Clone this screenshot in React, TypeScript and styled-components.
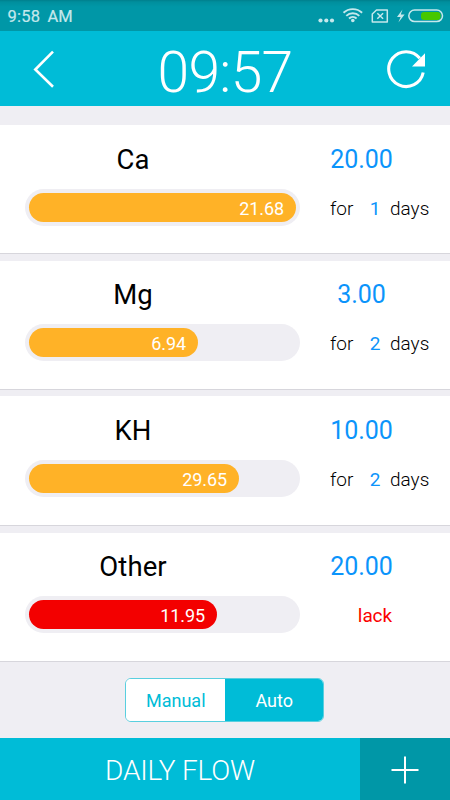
import React from "react";
import styled, { createGlobalStyle } from "styled-components";

const GlobalStyle = createGlobalStyle`
  * { box-sizing: border-box; }
  body { margin: 0; background: #efeef3; font-family: Roboto, sans-serif; }
  button { border: 0; padding: 0; margin: 0; background: none; font-family: inherit; }
`;

const Screen = styled.div`
  width: 450px;
  height: 800px;
  display: flex;
  flex-direction: column;
  overflow: hidden;
  background: #efeef3;
`;

const StatusBar = styled.div`
  height: 31px;
  flex: none;
  display: flex;
  align-items: center;
  justify-content: space-between;
  padding: 2px 6px 0 7.5px;
  color: #c5e8ec;
  background: linear-gradient(#007f8c 0, #008f9d 2px, #0097a7 7px);
`;

const Clock = styled.span`
  font-size: 16.5px;
  line-height: 20px;
  letter-spacing: 0.2px;
  word-spacing: 3px;
  -webkit-text-stroke: 0.2px currentColor;
`;

const Header = styled.header`
  height: 75px;
  flex: none;
  display: flex;
  align-items: center;
  justify-content: space-between;
  padding: 0 23px 0 33px;
  background: #00bcd7;
  color: #fff;
`;

const IconButton = styled.button`
  display: flex;
  color: #fff;
`;

const Title = styled.h1`
  margin: 0;
  font-size: 57px;
  line-height: 75px;
  font-weight: 300;
  letter-spacing: -0.7px;
  padding: 7px 0 0 8px;
`;

const List = styled.main`
  flex: none;
  height: 537px;
  margin-top: 19px;
  display: flex;
  flex-direction: column;
`;

const Card = styled.section`
  height: 129px;
  flex: none;
  display: grid;
  grid-template-columns: 275px 121px;
  grid-template-rows: 36px 37px;
  row-gap: 12px;
  column-gap: 8px;
  justify-content: start;
  padding: 15px 0 0 25px;
  background: #fff;
  border-bottom: 1px solid #d7d6dc;

  & + & {
    margin-top: 7px;
  }

  &:first-child {
    padding-top: 16px;
  }

  &:nth-child(3) {
    height: 130px;
    margin-top: 6px;
    padding-top: 16px;
  }
`;

const Name = styled.div`
  width: 216px;
  text-align: center;
  font-size: 27.5px;
  line-height: 38px;
  letter-spacing: 0.1px;
  color: #000;
`;

const Amount = styled.div`
  width: 107px;
  text-align: center;
  font-size: 25px;
  line-height: 38px;
  letter-spacing: -0.1px;
  color: #0b94fb;
`;

const Track = styled.div`
  height: 37px;
  padding: 4px;
  border-radius: 19px;
  background: #efeef3;
`;

const Fill = styled.div<{ $alert?: boolean }>`
  height: 29px;
  border-radius: 15px;
  padding-right: 12px;
  text-align: right;
  font-size: 18px;
  line-height: 31px;
  letter-spacing: -0.1px;
  color: #fff;
  background: ${(p) => (p.$alert ? "#f30000" : "#ffb227")};
`;

const Duration = styled.div`
  display: grid;
  grid-template-columns: 37px 16px 46px;
  justify-content: end;
  line-height: 39px;
  font-size: 19px;
  font-weight: 300;
  color: #000;
  white-space: nowrap;
`;

const Days = styled.span`
  text-align: center;
  font-weight: 400;
  color: #0b94fb;
`;

const Unit = styled.span`
  padding-left: 7px;
`;

const Lack = styled.div`
  padding-right: 37px;
  text-align: right;
  font-size: 19px;
  line-height: 40px;
  letter-spacing: -0.1px;
  color: #fb0000;
`;

const ModeArea = styled.div`
  flex: 1;
  display: flex;
  justify-content: center;
  align-items: flex-start;
  padding: 16px 1px 0 0;
`;

const Segments = styled.div`
  display: grid;
  grid-template-columns: 1fr 1fr;
  width: 199px;
  height: 44px;
  overflow: hidden;
  border: 1px solid #59cfdf;
  border-radius: 6px;
  background: #fff;
`;

const Segment = styled.button<{ $active?: boolean }>`
  font-size: 18px;
  line-height: 42px;
  padding: 1px 0 0 1px;
  color: ${(p) => (p.$active ? "#fff" : "#00bcd7")};
  background: ${(p) => (p.$active ? "#00bcd7" : "#fff")};
`;

const Footer = styled.footer`
  height: 62px;
  flex: none;
  display: grid;
  grid-template-columns: 360px 90px;
  background: #00bcd7;
`;

const FlowButton = styled.button`
  color: #fff;
  font-size: 28px;
  font-weight: 300;
  line-height: 62px;
  letter-spacing: -0.2px;
  padding-top: 2px;
`;

const AddButton = styled.button`
  display: flex;
  align-items: center;
  justify-content: center;
  background: #0097a7;
`;

type Item = {
  name: string;
  amount: string;
  level: string;
  width: number;
  days?: number;
};

const items: Item[] = [
  { name: "Ca", amount: "20.00", level: "21.68", width: 267, days: 1 },
  { name: "Mg", amount: "3.00", level: "6.94", width: 169, days: 2 },
  { name: "KH", amount: "10.00", level: "29.65", width: 210, days: 2 },
  { name: "Other", amount: "20.00", level: "11.95", width: 188 },
];

const StatusIcons = () => (
  <svg width="127" height="24" viewBox="317 5 127 24" fill="none">
    <g fill="#c5e8ec">
      <circle cx="320.5" cy="20.5" r="2.1" />
      <circle cx="326.3" cy="20.5" r="2.1" />
      <circle cx="332" cy="20.5" r="2.1" />
      <circle cx="352.8" cy="20.5" r="1.8" />
      <path d="M402.5 9.5 397 17h3.6l-2.2 5.5 6.2-8h-3.8z" />
    </g>
    <g stroke="#c5e8ec" strokeWidth="1.9">
      <path d="M343.5 12.8a13.5 13.5 0 0 1 18.6 0M346.3 15.9a9.2 9.2 0 0 1 13 0M349 18.5a5.5 5.5 0 0 1 7.6 0" />
      <path d="M376.5 10h10.8v12h-15v-8z" strokeWidth="1.5" strokeLinejoin="round" />
      <path d="m377.3 13.2 5.8 5.6m0-5.6-5.8 5.6" strokeWidth="1.5" />
    </g>
    <rect x="421" y="12" width="19.5" height="8" rx="3" fill="#46c800" />
    <rect x="408.8" y="10" width="33.7" height="11.6" rx="5.8" stroke="#c5e8ec" strokeWidth="1.5" />
  </svg>
);

const BackIcon = () => (
  <svg width="23" height="40" viewBox="33 48.5 23 40" fill="none">
    <path d="M53 51.2 35.3 69 53 86.2" stroke="#fff" strokeWidth="2.6" />
  </svg>
);

const RefreshIcon = () => (
  <svg width="41" height="42" viewBox="386 47.5 41 42" fill="none">
    <path d="M423.2 72a17.4 17.4 0 1 1-3.4-14.2" stroke="#fff" strokeWidth="3.1" />
    <path d="M425 52.8V66h-13z" fill="#fff" />
  </svg>
);

const PlusIcon = () => (
  <svg width="28" height="28" viewBox="0 0 28 28" fill="none">
    <path d="M14 .5v27M.5 14h27" stroke="#fff" strokeWidth="2" />
  </svg>
);

const SupplementCard = ({ item }: { item: Item }) => (
  <Card>
    <Name>{item.name}</Name>
    <Amount>{item.amount}</Amount>
    <Track>
      <Fill $alert={item.days === undefined} style={{ width: item.width }}>
        {item.level}
      </Fill>
    </Track>
    {item.days === undefined ? (
      <Lack>lack</Lack>
    ) : (
      <Duration>
        <span>for</span>
        <Days>{item.days}</Days>
        <Unit>days</Unit>
      </Duration>
    )}
  </Card>
);

export default function App() {
  return (
    <>
      <GlobalStyle />
      <Screen>
        <StatusBar>
          <Clock>9:58 AM</Clock>
          <StatusIcons />
        </StatusBar>
        <Header>
          <IconButton aria-label="Back">
            <BackIcon />
          </IconButton>
          <Title>09:57</Title>
          <IconButton aria-label="Refresh">
            <RefreshIcon />
          </IconButton>
        </Header>
        <List>
          {items.map((item) => (
            <SupplementCard key={item.name} item={item} />
          ))}
        </List>
        <ModeArea>
          <Segments>
            <Segment>Manual</Segment>
            <Segment $active>Auto</Segment>
          </Segments>
        </ModeArea>
        <Footer>
          <FlowButton>DAILY FLOW</FlowButton>
          <AddButton aria-label="Add">
            <PlusIcon />
          </AddButton>
        </Footer>
      </Screen>
    </>
  );
}
